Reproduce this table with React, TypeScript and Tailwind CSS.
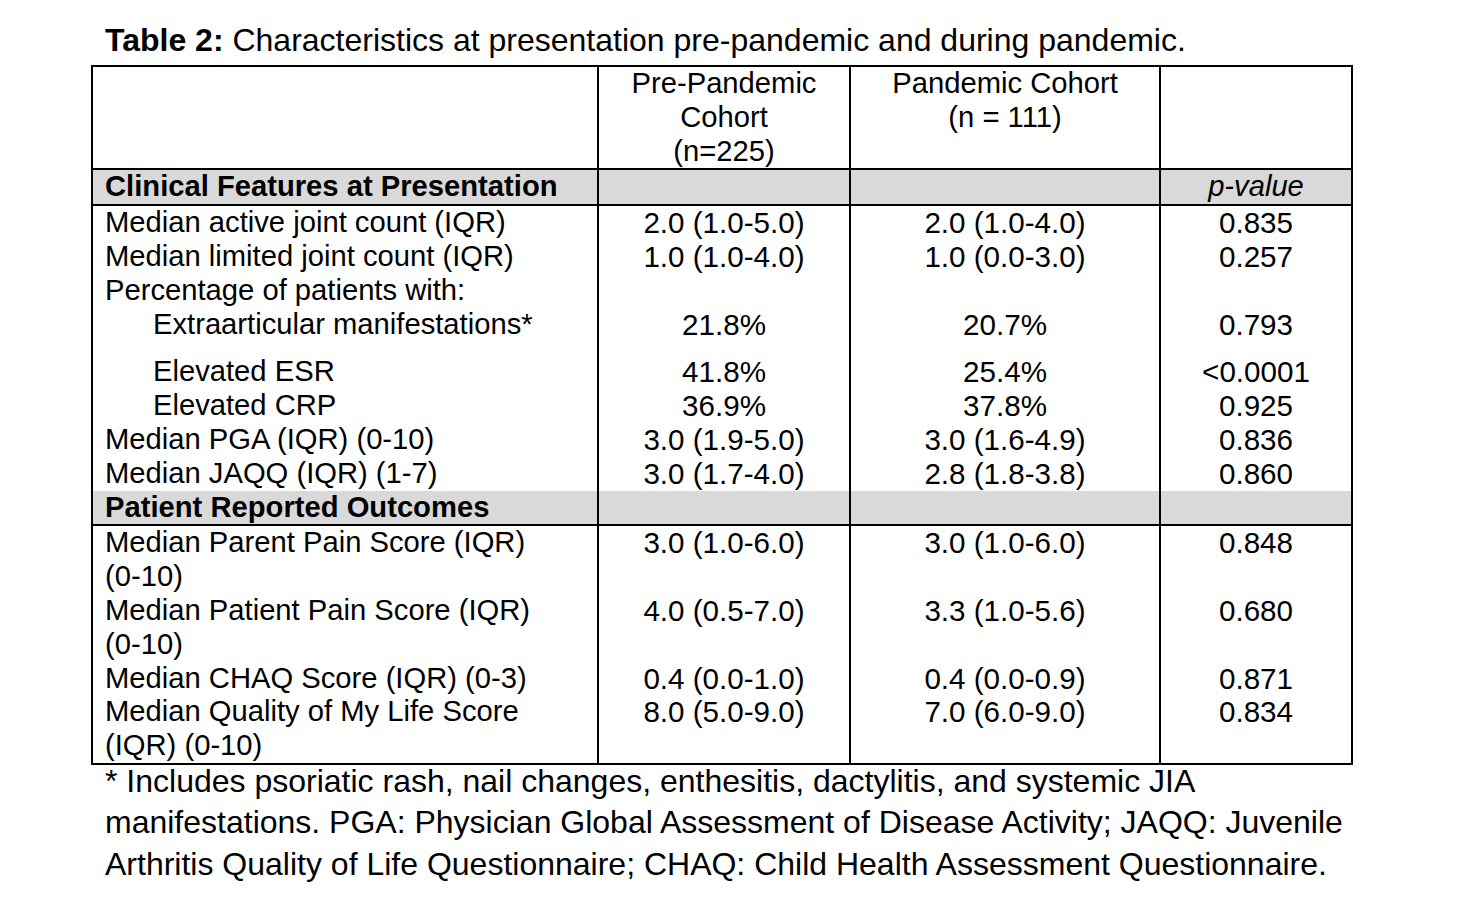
import React from "react";

const font = { fontFamily: '"Liberation Sans", Arial, Helvetica, sans-serif' };

type Row = {
  label: React.ReactNode;
  indent?: boolean;
  a?: string;
  b?: string;
  p?: string;
};

function BodyRow({ r }: { r: Row }) {
  return (
    <div className="flex">
      <div className={`w-[506px] shrink-0 border-r-2 border-black pr-2 ${r.indent ? "pl-[60px]" : "pl-[12px]"}`}>
        {r.label}
      </div>
      <div className="w-[252px] shrink-0 border-r-2 border-black text-center text-[29.6px]">{r.a ?? ""}</div>
      <div className="w-[310px] shrink-0 border-r-2 border-black text-center text-[29.6px]">{r.b ?? ""}</div>
      <div className="w-[190px] shrink-0 text-center text-[29.6px]">{r.p ?? ""}</div>
    </div>
  );
}

function SpacerRow() {
  return (
    <div className="flex h-[14px]">
      <div className="w-[506px] shrink-0 border-r-2 border-black"></div>
      <div className="w-[252px] shrink-0 border-r-2 border-black"></div>
      <div className="w-[310px] shrink-0 border-r-2 border-black"></div>
      <div className="w-[190px] shrink-0"></div>
    </div>
  );
}

function GrayRow({ title, p }: { title: string; p?: React.ReactNode }) {
  return (
    <div className="flex bg-[#d9d9d9] border-b-2 border-black">
      <div className="w-[506px] shrink-0 border-r-2 border-black pl-[12px] font-bold">{title}</div>
      <div className="w-[252px] shrink-0 border-r-2 border-black"></div>
      <div className="w-[310px] shrink-0 border-r-2 border-black"></div>
      <div className="w-[190px] shrink-0 text-center">{p}</div>
    </div>
  );
}

export default function App() {
  const block1a: Row[] = [
    { label: "Median active joint count (IQR)", a: "2.0 (1.0-5.0)", b: "2.0 (1.0-4.0)", p: "0.835" },
    { label: "Median limited joint count (IQR)", a: "1.0 (1.0-4.0)", b: "1.0 (0.0-3.0)", p: "0.257" },
    { label: "Percentage of patients with:" },
    { label: "Extraarticular manifestations*", indent: true, a: "21.8%", b: "20.7%", p: "0.793" },
  ];
  const block1b: Row[] = [
    { label: "Elevated ESR", indent: true, a: "41.8%", b: "25.4%", p: "<0.0001" },
    { label: "Elevated CRP", indent: true, a: "36.9%", b: "37.8%", p: "0.925" },
    { label: "Median PGA (IQR) (0-10)", a: "3.0 (1.9-5.0)", b: "3.0 (1.6-4.9)", p: "0.836" },
    { label: "Median JAQQ (IQR) (1-7)", a: "3.0 (1.7-4.0)", b: "2.8 (1.8-3.8)", p: "0.860" },
  ];
  const block2: Row[] = [
    {
      label: (
        <>
          Median Parent Pain Score (IQR)
          <br />
          (0-10)
        </>
      ),
      a: "3.0 (1.0-6.0)",
      b: "3.0 (1.0-6.0)",
      p: "0.848",
    },
    {
      label: (
        <>
          Median Patient Pain Score (IQR)
          <br />
          (0-10)
        </>
      ),
      a: "4.0 (0.5-7.0)",
      b: "3.3 (1.0-5.6)",
      p: "0.680",
    },
    { label: "Median CHAQ Score (IQR) (0-3)", a: "0.4 (0.0-1.0)", b: "0.4 (0.0-0.9)", p: "0.871" },
    {
      label: (
        <>
          Median Quality of My Life Score
          <br />
          (IQR) (0-10)
        </>
      ),
      a: "8.0 (5.0-9.0)",
      b: "7.0 (6.0-9.0)",
      p: "0.834",
    },
  ];

  return (
    <div className="min-h-screen bg-white text-black" style={font}>
      <div className="pl-[91px] pt-[23px]">
        <div className="pl-[14px] text-[32px] leading-[34px]">
          <span className="font-bold">Table 2:</span> Characteristics at presentation pre-pandemic and during pandemic.
        </div>
        <div className="mt-[8px] w-[1262px] border-2 border-black text-[29.2px] leading-[33.8px]">
          <div className="flex border-b-2 border-black">
            <div className="w-[506px] shrink-0 border-r-2 border-black"></div>
            <div className="w-[252px] shrink-0 border-r-2 border-black text-center">
              Pre-Pandemic
              <br />
              Cohort
              <br />
              (n=225)
            </div>
            <div className="w-[310px] shrink-0 border-r-2 border-black text-center">
              Pandemic Cohort
              <br />
              (n = 111)
            </div>
            <div className="w-[190px] shrink-0"></div>
          </div>
          <GrayRow title="Clinical Features at Presentation" p={<span className="italic">p-value</span>} />
          {block1a.map((r, i) => (
            <BodyRow key={i} r={r} />
          ))}
          <SpacerRow />
          {block1b.map((r, i) => (
            <BodyRow key={i} r={r} />
          ))}
          <GrayRow title="Patient Reported Outcomes" />
          {block2.map((r, i) => (
            <BodyRow key={i} r={r} />
          ))}
        </div>
        <div className="mt-[-4px] pl-[14px] text-[32px] leading-[41.5px]">
          * Includes psoriatic rash, nail changes, enthesitis, dactylitis, and systemic JIA
          <br />
          manifestations. PGA: Physician Global Assessment of Disease Activity; JAQQ: Juvenile
          <br />
          Arthritis Quality of Life Questionnaire; CHAQ: Child Health Assessment Questionnaire.
        </div>
      </div>
    </div>
  );
}
